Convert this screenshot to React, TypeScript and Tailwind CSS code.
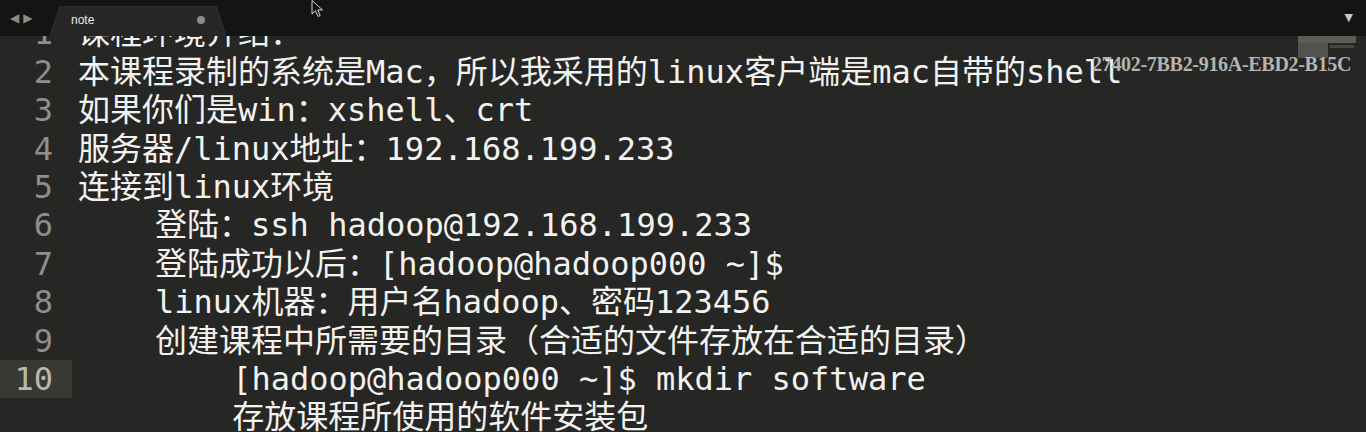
const lines = [
  "课程环境介绍：",
  "本课程录制的系统是Mac，所以我采用的linux客户端是mac自带的shell",
  "如果你们是win：xshell、crt",
  "服务器/linux地址：192.168.199.233",
  "连接到linux环境",
  "    登陆：ssh hadoop@192.168.199.233",
  "    登陆成功以后：[hadoop@hadoop000 ~]$",
  "    linux机器：用户名hadoop、密码123456",
  "    创建课程中所需要的目录（合适的文件存放在合适的目录）",
  "        [hadoop@hadoop000 ~]$ mkdir software",
  "        存放课程所使用的软件安装包",
];

const mono = "font-['DejaVu_Sans_Mono','Noto_Sans_CJK_SC',monospace]";

export default function App() {
  return (
    <div className="w-[1366px] h-[432px] overflow-hidden bg-[#262624] flex flex-col">
      {/* tab bar */}
      <div className="relative h-[36px] shrink-0 bg-[#141412] flex items-end">
        <div className="w-[50px] h-full flex items-center justify-start gap-[4px] pl-[10px] text-[#8a8a88] text-[12px] font-['DejaVu_Sans',sans-serif]">
          <span>◀</span>
          <span>▶</span>
        </div>
        <div className="relative w-[176px] h-[30px]">
          <svg className="absolute inset-0" width="176" height="30" viewBox="0 0 176 30">
            <path d="M0 30 L10 0 L166 0 L176 30 Z" fill="#262624" />
            <path d="M0 30 L10 0 L166 0 L176 30" fill="none" stroke="#33332f" strokeWidth="1" />
          </svg>
          <div className="relative h-full flex items-center pl-[21px] pr-[21px] pb-[2px]">
            <span className="text-[12px] text-[#e6e6e4] font-['Liberation_Sans',sans-serif]">note</span>
            <span className="ml-auto w-[8px] h-[8px] rounded-full bg-[#8c8c8a]" />
          </div>
        </div>
        <svg className="absolute left-[311px] top-0" width="14" height="18" viewBox="0 0 14 18">
          <path d="M1 0.5 L1 14 L4.5 10.8 L7 16.5 L9.2 15.5 L6.8 10 L11.5 10 Z" fill="#111" stroke="#d8d8d8" strokeWidth="1" />
        </svg>
        <div className="ml-auto mr-[13px] self-center text-[#c8c8c6] text-[11px] font-['DejaVu_Sans',sans-serif]">▼</div>
      </div>

      {/* editor */}
      <div className="relative flex-1 overflow-hidden">
        <div className={`-mt-[21.6px] ${mono} text-[32px] leading-[38.4px]`}>
          {lines.map((l, i) => (
            <div key={i} className="flex">
              <div
                className={`w-[72px] shrink-0 text-right pr-[19px] ${
                  i === 9 ? "bg-[#393933] text-[#b8b8b2]" : "text-[#8e8e8a]"
                }`}
              >
                {i < 10 ? i + 1 : ""}
              </div>
              <div className="pl-[6px] whitespace-pre text-[#f2f2f0]">{l}</div>
            </div>
          ))}
        </div>

        {/* watermark */}
        <div className="absolute left-[1298px] top-[0px] w-[58px] h-[7px] bg-[#6a6a66] opacity-80" />
        <div className="absolute left-[1298px] top-[6px] w-[30px] h-[16px] bg-[#5e5e5a] opacity-80" />
        <div className="absolute left-[1330px] top-[9px] w-[24px] h-[3px] bg-[#55554f] opacity-70" />
        <div className="absolute left-[1092px] top-[13px] text-[20px] font-bold text-[#b4b4b0] font-['Liberation_Serif',serif] tracking-[-0.3px]">
          27402-7BB2-916A-EBD2-B15C
        </div>
      </div>
    </div>
  );
}
